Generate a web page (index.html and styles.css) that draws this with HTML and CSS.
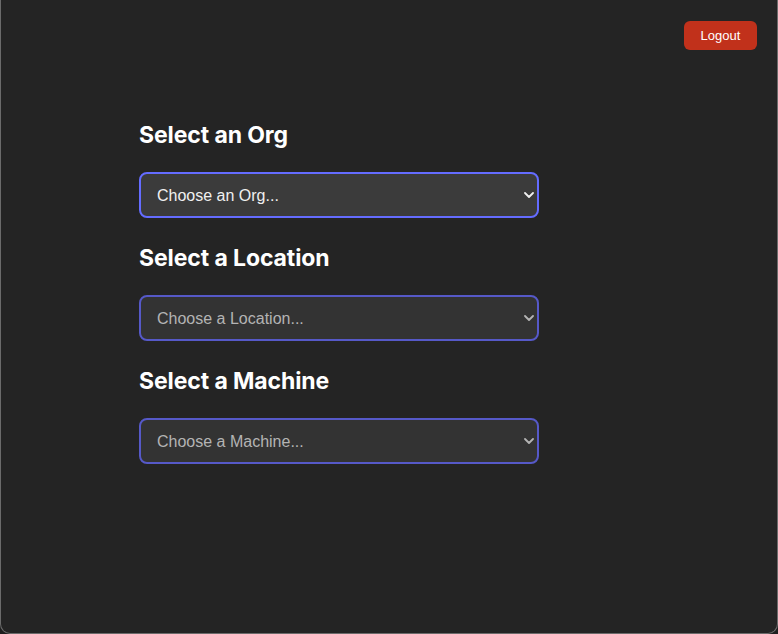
FILE: index.html
```html
<!DOCTYPE html>
<html lang="en">
<head>
<meta charset="utf-8">
<title>Select</title>
<link rel="stylesheet" href="styles.css">
</head>
<body>
<div class="frame">
  <header class="topbar">
    <button class="logout" type="button">Logout</button>
  </header>
  <main class="content">
    <section class="group">
      <h2 class="title">Select an Org</h2>
      <div class="select-wrap">
        <select class="picker picker-active">
          <option>Choose an Org...</option>
        </select>
        <svg class="chev chev-active" width="10" height="6" viewBox="0 0 10 6"><path d="M1 1 L5 5 L9 1" fill="none" stroke="currentColor" stroke-width="1.8" stroke-linecap="round" stroke-linejoin="round"/></svg>
      </div>
    </section>
    <section class="group">
      <h2 class="title">Select a Location</h2>
      <div class="select-wrap">
        <select class="picker">
          <option>Choose a Location...</option>
        </select>
        <svg class="chev" width="10" height="6" viewBox="0 0 10 6"><path d="M1 1 L5 5 L9 1" fill="none" stroke="currentColor" stroke-width="1.8" stroke-linecap="round" stroke-linejoin="round"/></svg>
      </div>
    </section>
    <section class="group">
      <h2 class="title">Select a Machine</h2>
      <div class="select-wrap">
        <select class="picker">
          <option>Choose a Machine...</option>
        </select>
        <svg class="chev" width="10" height="6" viewBox="0 0 10 6"><path d="M1 1 L5 5 L9 1" fill="none" stroke="currentColor" stroke-width="1.8" stroke-linecap="round" stroke-linejoin="round"/></svg>
      </div>
    </section>
  </main>
</div>
</body>
</html>
```
FILE: styles.css
```css
html, body {
  margin: 0;
  padding: 0;
  background: #1e1e1e;
}
body {
  width: 778px;
  height: 634px;
  overflow: hidden;
}
.frame {
  box-sizing: border-box;
  width: 778px;
  height: 634px;
  background: #242424;
  border: 1px solid #6b6b6b;
  border-top: none;
  border-radius: 0 0 10px 10px;
  font-family: Inter, "Liberation Sans", sans-serif;
  color: #ffffff;
}
.topbar {
  display: flex;
  justify-content: flex-end;
  padding: 21px 20px 0 0;
}
.logout {
  width: 73px;
  height: 29px;
  border: none;
  border-radius: 6px;
  background: #c1311b;
  color: #ffffff;
  font-family: "Liberation Sans", Arial, sans-serif;
  font-size: 13px;
  padding: 0;
  cursor: pointer;
}
.content {
  width: 400px;
  margin: 0 0 0 138px;
  padding-top: 69px;
}
.group {
  margin-bottom: 24px;
}
.title {
  margin: 0 0 22px;
  padding-top: 1px;
  font-size: 23px;
  line-height: 30px;
  font-weight: 700;
  letter-spacing: -0.1px;
  color: #ffffff;
}
.select-wrap {
  position: relative;
  width: 400px;
  height: 46px;
}
.picker {
  appearance: none;
  -webkit-appearance: none;
  box-sizing: border-box;
  width: 400px;
  height: 46px;
  margin: 0;
  padding: 0 24px 0 16px;
  border: 2px solid #5659c8;
  border-radius: 8px;
  background: #333333;
  color: #b4b4b4;
  font-family: "Liberation Sans", Arial, sans-serif;
  font-size: 16px;
  outline: none;
}
.picker-active {
  border-color: #646cff;
  background: #3b3b3b;
  color: #f0f0f0;
}
.chev {
  position: absolute;
  right: 5px;
  top: 20px;
  color: #b4b4b4;
  pointer-events: none;
}
.chev-active {
  color: #f0f0f0;
}
```
